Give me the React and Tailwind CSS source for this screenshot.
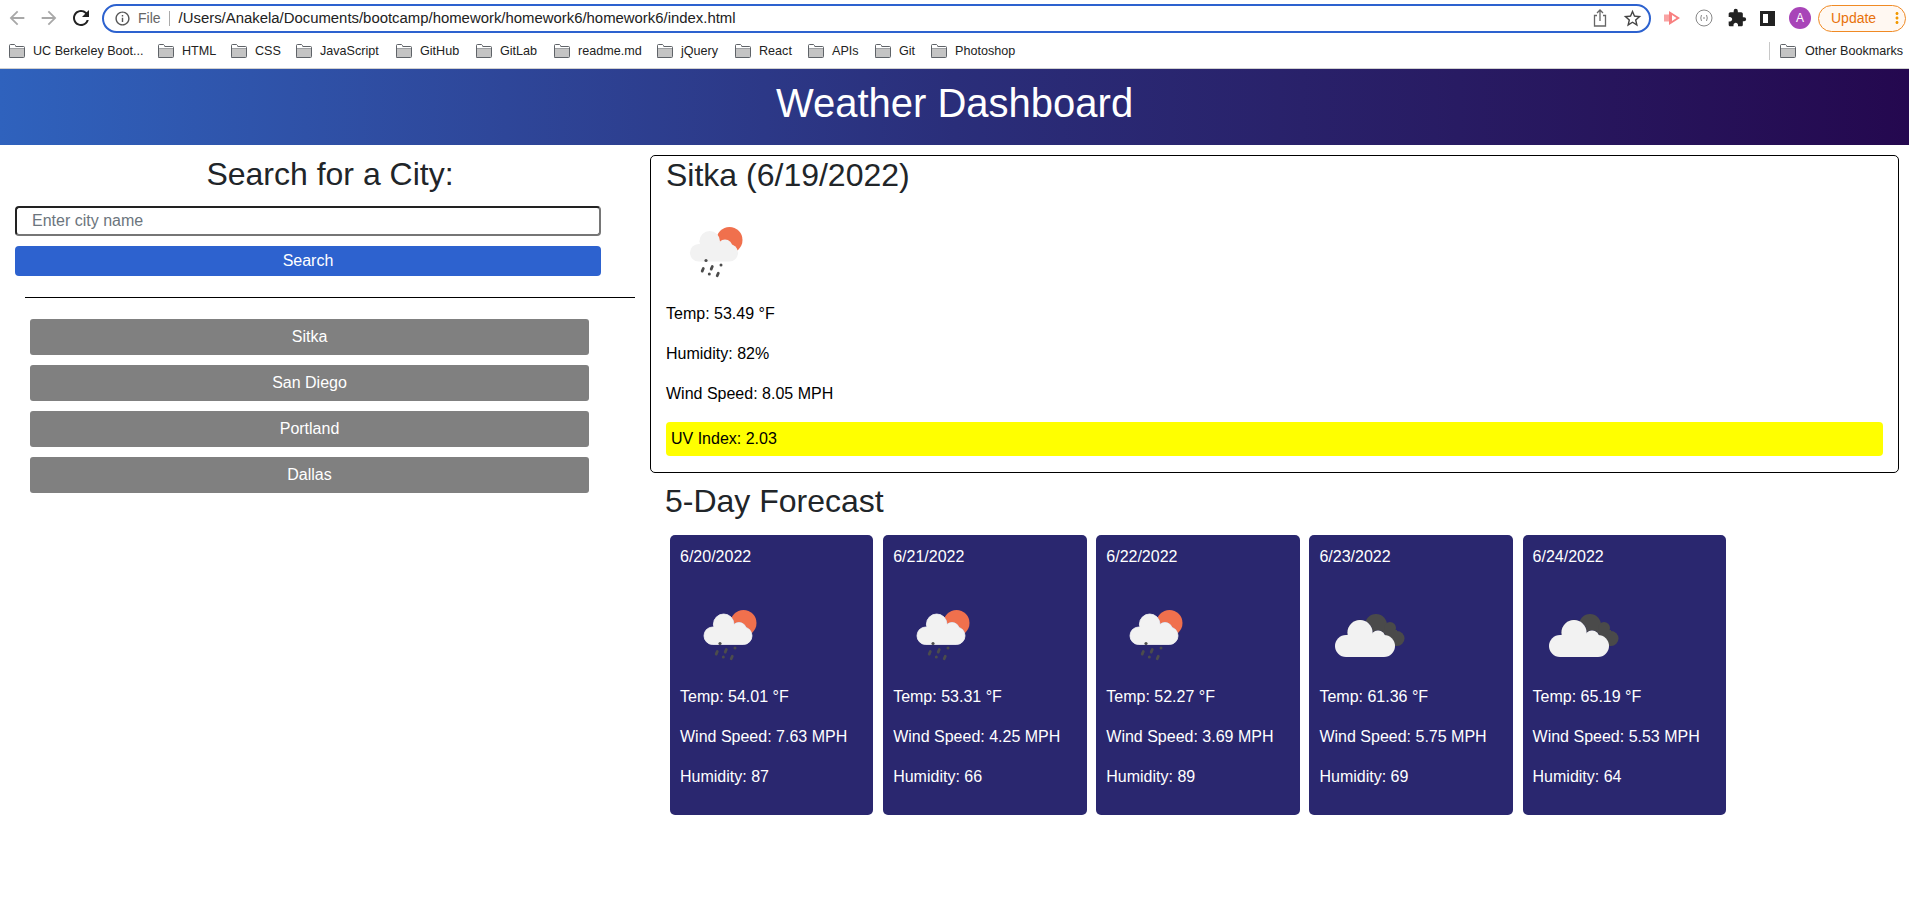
import {
  MdArrowBack,
  MdArrowForward,
  MdRefresh,
  MdInfoOutline,
  MdStarBorder,
  MdExtension,
  MdMoreVert,
} from "react-icons/md";

const bookmarks = [
  ["UC Berkeley Boot...", "w-[149px]"],
  ["HTML", "w-[73px]"],
  ["CSS", "w-[65px]"],
  ["JavaScript", "w-[100px]"],
  ["GitHub", "w-[80px]"],
  ["GitLab", "w-[78px]"],
  ["readme.md", "w-[103px]"],
  ["jQuery", "w-[78px]"],
  ["React", "w-[73px]"],
  ["APIs", "w-[67px]"],
  ["Git", "w-[56px]"],
  ["Photoshop", "w-[100px]"],
];

const cities = ["Sitka", "San Diego", "Portland", "Dallas"];

const forecast = [
  { date: "6/20/2022", icon: "rain", temp: "54.01", wind: "7.63", humidity: "87" },
  { date: "6/21/2022", icon: "rain", temp: "53.31", wind: "4.25", humidity: "66" },
  { date: "6/22/2022", icon: "rain", temp: "52.27", wind: "3.69", humidity: "89" },
  { date: "6/23/2022", icon: "clouds", temp: "61.36", wind: "5.75", humidity: "69" },
  { date: "6/24/2022", icon: "clouds", temp: "65.19", wind: "5.53", humidity: "64" },
];

const Folder = () => (
  <svg width="16" height="14" viewBox="0 0 16 14" className="shrink-0">
    <path d="M0.5 12.5V1.5q0-1 1-1h4l1.5 2h7.5q1 0 1 1v9q0 1-1 1h-13.5q-1 0-1-1z" fill="#c4c4c4" stroke="#5f6368" />
    <path d="M0.5 4.5h15" stroke="#5f6368" fill="none" />
    <rect x="1" y="1" width="5" height="3" fill="#fff" />
    <rect x="1" y="3" width="14" height="1.4" fill="#fff" />
  </svg>
);

const RainIcon = ({ outline, className }) => (
  <svg width="100" height="100" viewBox="0 0 100 100" className={`block ${className || ""}`}>
    <circle cx="63.500" cy="42" r="13" fill="#f0704d" />
    {outline && (
      <g fill={outline} stroke={outline} strokeWidth="1">
        <circle cx="43.700" cy="43.300" r="10.300" />
        <circle cx="59" cy="49" r="7.500" />
        <rect x="24" y="46" width="48" height="17.500" rx="8.700" />
      </g>
    )}
    <g fill="#f2f2f2">
      <circle cx="43.700" cy="43.300" r="10.300" />
      <circle cx="59" cy="49" r="7.500" />
      <rect x="24" y="46" width="48" height="17.500" rx="8.700" />
    </g>
    <g fill="#4c4c4c">
      <circle cx="40" cy="62.500" r="1.600" />
      <circle cx="55" cy="67" r="1.500" />
      <circle cx="43.300" cy="76" r="1.500" />
    </g>
    <g stroke="#4c4c4c" strokeWidth="2.800" strokeLinecap="round">
      <path d="M46.300 68.500l-1.100 2.600" />
      <path d="M37.300 70.500l-1.100 2.600" />
      <path d="M52.300 75.200l-1.100 2.600" />
    </g>
  </svg>
);

const CloudsIcon = () => (
  <svg width="100" height="100" viewBox="0 0 100 100" className="block">
    <g fill="#4a4a4a">
      <circle cx="57" cy="44" r="11" />
      <circle cx="71" cy="47" r="6" />
      <circle cx="78" cy="57.500" r="7.500" />
      <rect x="55" y="49" width="23" height="16" />
    </g>
    <g fill="#f2f2f2" stroke="#2a2a50" strokeWidth="0.800">
      <circle cx="41" cy="51.500" r="12.500" />
      <circle cx="59" cy="57" r="7.500" />
    </g>
    <g fill="#f2f2f2">
      <circle cx="41" cy="51.500" r="12.500" />
      <circle cx="59" cy="57" r="7.500" />
      <rect x="16" y="54" width="60" height="22" rx="11" />
    </g>
  </svg>
);

const ForecastCard = ({ day }) => (
  <div className="w-[203.4px] h-[280px] bg-[#2a276f] rounded-[5px] p-[10px] text-white text-base">
    <p className="leading-6 mb-[12px]">{day.date}</p>
    {day.icon === "rain" ? <RainIcon outline="#cfcfe0" /> : <CloudsIcon />}
    <p className="leading-6 mt-[4px] mb-4">Temp: {day.temp} °F</p>
    <p className="leading-6 mb-4">Wind Speed: {day.wind} MPH</p>
    <p className="leading-6">Humidity: {day.humidity}</p>
  </div>
);

const BrowserBar = () => (
  <div className="h-[69px] bg-white border-b border-[#d0d0d0] font-['Liberation_Sans',sans-serif]">
    <div className="h-[36px] flex items-center">
      <div className="w-[102px] flex items-center pl-[6px] gap-[10px]">
        <MdArrowBack size={22} className="text-[#a8a8a8]" />
        <MdArrowForward size={22} className="text-[#a8a8a8]" />
        <MdRefresh size={24} className="text-[#222] -ml-[1px]" />
      </div>
      <div className="w-[1549px] h-[29px] border-2 border-[#2d62cf] rounded-full flex items-center pl-[10px] pr-[5px]">
        <MdInfoOutline size={17} className="text-[#555]" />
        <span className="text-[14px] text-[#666] ml-[7px]">File</span>
        <span className="w-px h-[15px] bg-[#aaa] ml-[8px] mr-[9px]"></span>
        <span className="text-[14.9px] text-[#222]">/Users/Anakela/Documents/bootcamp/homework/homework6/homework6/index.html</span>
        <svg width="14" height="18" viewBox="0 0 14 18" className="ml-auto mr-[15px]" fill="none" stroke="#666" strokeWidth="1.3">
          <path d="M4 6.5H1.5v10.5h11V6.5H10" />
          <path d="M7 12V1.5M4 4l3-3 3 3" />
        </svg>
        <MdStarBorder size={21} className="text-[#444] mr-[1px]" />
      </div>
      <svg width="18" height="16" viewBox="0 0 18 16" className="ml-[12px]">
        <rect x="1" y="4.5" width="5" height="7" fill="#f9a3a3" />
        <path d="M6 1l11 7-11 7zM9 5v6l4.500-3z" fill="#f88080" fillRule="evenodd" />
      </svg>
      <svg width="18" height="18" viewBox="0 0 18 18" className="ml-[14px]" fill="none" stroke="#888">
        <circle cx="9" cy="9" r="8" />
        <path d="M6.500 6q-1.500 3 0 6M11.500 6q1.500 3 0 6M8 9h2" />
      </svg>
      <MdExtension size={20} className="text-[#222] ml-[14px]" />
      <div className="ml-[13px] w-[15px] h-[15px] border-[3px] border-r-[7px] border-[#222] bg-white"></div>
      <div className="ml-[14px] w-[22px] h-[22px] rounded-full bg-[#a845b8] text-white text-[12px] flex items-center justify-center">A</div>
      <div className="ml-[7px] w-[88px] h-[27px] rounded-full border border-[#f08a24] bg-[#fff8f2] flex items-center pl-[12px] text-[14px] text-[#e8710a]">
        Update
        <MdMoreVert size={18} className="text-[#f29900] ml-auto mr-[-1px]" />
      </div>
    </div>
    <div className="h-[30px] flex items-center pl-[9px] text-[12.6px] text-[#222]">
      {bookmarks.map(([label, width]) => (
        <div key={label} className={`${width} flex items-center gap-[8px] shrink-0`}>
          <Folder />
          <span className="whitespace-nowrap">{label}</span>
        </div>
      ))}
      <div className="ml-auto flex items-center pr-[6px]">
        <span className="w-px h-[18px] bg-[#c8c8c8] mr-[10px]"></span>
        <Folder />
        <span className="ml-[9px] whitespace-nowrap">Other Bookmarks</span>
      </div>
    </div>
  </div>
);

const App = () => {
  return (
    <div className="min-h-[924px] bg-white font-['Liberation_Sans',Arial,sans-serif] text-black">
      <BrowserBar />
      <header className="h-[76px] pb-[8px] bg-gradient-to-r from-[#2f62bd] via-[#2a2e7a] to-[#24084f] flex items-center justify-center">
        <h1 className="text-[40px] text-white leading-none">Weather Dashboard</h1>
      </header>

      <div className="flex">
        <aside className="w-[650px] shrink-0 pt-[10px]">
          <h2 className="ml-[25px] w-[610px] text-center text-[32px] leading-[38px] text-[#212529]">Search for a City:</h2>
          <input
            type="text"
            placeholder="Enter city name"
            className="block ml-[15px] mt-[13px] w-[586px] h-[30px] px-[15px] border-2 border-[#222] border-b-[#767676] border-r-[#767676] rounded-[4px] text-base text-black placeholder:text-[#6c757d] outline-none"
          />
          <button className="block ml-[15px] mt-[10px] w-[586px] h-[30px] bg-[#2d62cf] text-white text-base rounded-[4px]">Search</button>
          <hr className="ml-[25px] w-[610px] mt-[21px] border-t border-black" />
          <div className="ml-[30px] w-[559px] mt-[21px] flex flex-col gap-[10px]">
            {cities.map((city) => (
              <button key={city} className="h-[36px] bg-[#808080] text-white text-base rounded-[3px]">
                {city}
              </button>
            ))}
          </div>
        </aside>

        <main className="flex-1 pt-[10px] pr-[10px]">
          <section className="h-[318px] border border-black rounded-[5px] pl-[15px] pr-[15px]">
            <h2 className="text-[32px] leading-[38px] text-[#212529]">Sitka (6/19/2022)</h2>
            <RainIcon className="mt-[4px]" />
            <p className="leading-6 mt-[4px] mb-4">Temp: 53.49 °F</p>
            <p className="leading-6 mb-4">Humidity: 82%</p>
            <p className="leading-6 mb-4">Wind Speed: 8.05 MPH</p>
            <p className="h-[34px] bg-[#ffff00] rounded-[4px] pl-[5px] leading-[34px]">UV Index: 2.03</p>
          </section>
          <h2 className="ml-[15px] mt-[9px] text-[32px] leading-[38px] text-[#212529]">5-Day Forecast</h2>
          <div className="flex gap-[9.75px] ml-[20px] mt-[15px]">
            {forecast.map((day) => (
              <ForecastCard key={day.date} day={day} />
            ))}
          </div>
        </main>
      </div>
    </div>
  );
};

export default App;
